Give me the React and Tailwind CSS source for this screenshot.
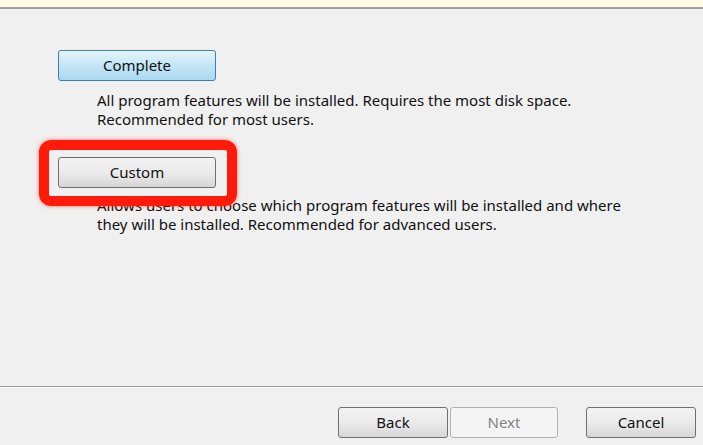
export default function App() {
  const font = { fontFamily: '"Noto Sans", "Open Sans", sans-serif' };
  return (
    <div className="w-[703px] h-[445px] bg-[#f0f0f0] flex flex-col overflow-hidden text-[15px] text-[#111]" style={font}>
      <div className="h-[7px] bg-[#fffce6] shrink-0" />
      <div className="h-[2px] bg-[#a0a0a0] shrink-0" />
      <div className="flex-1 flex flex-col pl-[58px] pt-[41px]">
        <button className="w-[158px] h-[31px] rounded-[3px] border border-[#3c7fb1] bg-gradient-to-b from-[#e5f4fc] via-[#c4e5f6] to-[#a9d9f1] text-[15px] leading-none">
          Complete
        </button>
        <p className="ml-[39px] mt-[10px] leading-[19px]">
          All program features will be installed. Requires the most disk space.<br />
          Recommended for most users.
        </p>
        <div className="relative mt-[28px] w-[158px] h-[31px]">
          <div className="absolute left-[-19px] top-[-17px] w-[198px] h-[66px] rounded-[12px] border-[10px] border-[#ff1a0a] shadow-[0_0_4px_rgba(255,40,20,0.6)]" />
          <button className="relative w-[158px] h-[31px] rounded-[3px] border border-[#707070] bg-gradient-to-b from-[#f2f2f2] via-[#ebebeb] to-[#d6d6d6] text-[15px] leading-none">
            Custom
          </button>
        </div>
        <p className="ml-[39px] mt-[8px] leading-[19px]">
          Allows users to choose which program features will be installed and where<br />
          they will be installed. Recommended for advanced users.
        </p>
      </div>
      <div className="h-[1px] bg-[#a0a0a0] shrink-0" />
      <div className="h-[1px] bg-white shrink-0" />
      <div className="h-[57px] shrink-0 flex items-start pt-[19px] pl-[338px]">
        <button className="w-[110px] h-[31px] rounded-[3px] border border-[#707070] bg-gradient-to-b from-[#f2f2f2] via-[#ebebeb] to-[#d6d6d6] text-[15px] leading-none">
          Back
        </button>
        <button className="ml-[2px] w-[108px] h-[31px] rounded-[3px] border border-[#adb2b5] bg-[#f4f4f4] text-[#838383] text-[15px] leading-none">
          Next
        </button>
        <button className="ml-[28px] w-[110px] h-[31px] rounded-[3px] border border-[#707070] bg-gradient-to-b from-[#f2f2f2] via-[#ebebeb] to-[#d6d6d6] text-[15px] leading-none">
          Cancel
        </button>
      </div>
    </div>
  );
}
